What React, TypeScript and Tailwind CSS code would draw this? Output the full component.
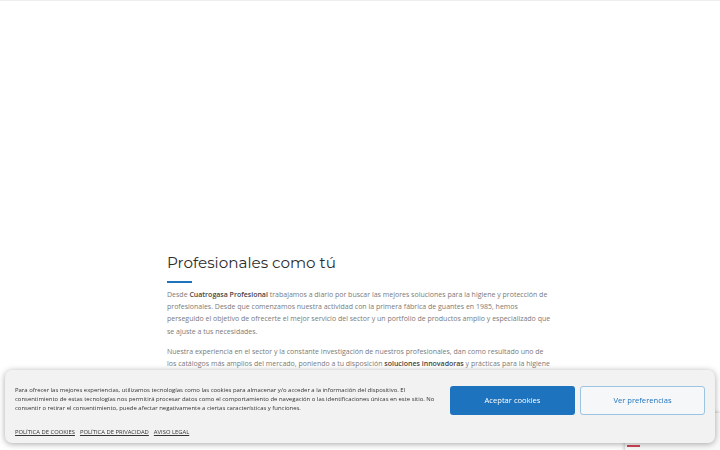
import React from 'react';

const body = "font-['Open_Sans','Liberation_Sans',sans-serif]";

const App: React.FC = () => {
  return (
    <div className={`min-h-[450px] bg-white border-t border-[#eeeeee] ${body}`}>
      <section className="w-[386px] pr-[2px] mx-auto pt-[250px] pb-10">
        <h2 className="text-[15.2px] leading-[24px] text-[#2d2d2d] font-['Montserrat','Open_Sans',sans-serif]">
          Profesionales como tú
        </h2>
        <div className="mt-[6px] w-[25px] h-[2px] bg-[#1e73be]" />
        <p className="mt-[6px] text-[7px] leading-[12.2px] text-[#7a7a7a]">
          Desde <strong className="font-semibold text-[#444]">Cuatrogasa Profesional</strong> trabajamos a diario por buscar las mejores soluciones para la higiene y protección de profesionales. Desde que comenzamos nuestra actividad con la primera fábrica de guantes en 1985, hemos perseguido el objetivo de ofrecerte el mejor servicio del sector y un portfolio de productos amplio y especializado que se ajuste a tus necesidades.
        </p>
        <p className="mt-[8px] text-[7px] leading-[12.6px] text-[#7a7a7a]">
          Nuestra experiencia en el sector y la constante investigación de nuestros profesionales, dan como resultado uno de los catálogos más amplios del mercado, poniendo a tu disposición <strong className="font-semibold text-[#444]">soluciones innovadoras</strong> y prácticas para la higiene y protección de tu equipo de trabajo.
        </p>
      </section>

      {/* badge peeking under the banner */}
      <div className="fixed right-0 bottom-[-40px] w-[95px] h-[77px] rounded-l-[2px] bg-[#f9f9f9] shadow-[0_0_4px_rgba(0,0,0,0.3)]">
        <div className="absolute left-[2px] top-[32px] w-[13px] h-[2px] bg-[#d0475a]" />
      </div>

      {/* cookie banner */}
      <div className="fixed left-[5px] right-[5px] bottom-[7px] h-[73px] rounded-[7px] bg-[#f2f2f2] shadow-[0_1px_6px_rgba(0,0,0,0.35)] flex pl-[10px] pr-[10px]">
        <div className="flex-1 flex flex-col pt-[16px]">
          <p className="text-[5.95px] leading-[9px] text-[#333] pr-2">
            Para ofrecer las mejores experiencias, utilizamos tecnologías como las cookies para almacenar y/o acceder a la información del dispositivo. El consentimiento de estas tecnologías nos permitirá procesar datos como el comportamiento de navegación o las identificaciones únicas en este sitio. No consentir o retirar el consentimiento, puede afectar negativamente a ciertas características y funciones.
          </p>
          <div className="mt-[15px] flex gap-[5px] text-[5.85px] leading-[9px] text-[#333] uppercase">
            <a href="#" className="underline">Política de cookies</a>
            <a href="#" className="underline">Política de privacidad</a>
            <a href="#" className="underline">Aviso legal</a>
          </div>
        </div>
        <div className="flex gap-[5px] pt-[16px]">
          <button className="w-[125px] h-[29px] rounded-[3px] bg-[#1e73be] text-white text-[7.6px]">
            Aceptar cookies
          </button>
          <button className="w-[125px] h-[29px] rounded-[3px] border border-[#9cc3e0] bg-[#f5f7f9] text-[#1e73be] text-[7.6px]">
            Ver preferencias
          </button>
        </div>
      </div>
    </div>
  );
};

export default App;
